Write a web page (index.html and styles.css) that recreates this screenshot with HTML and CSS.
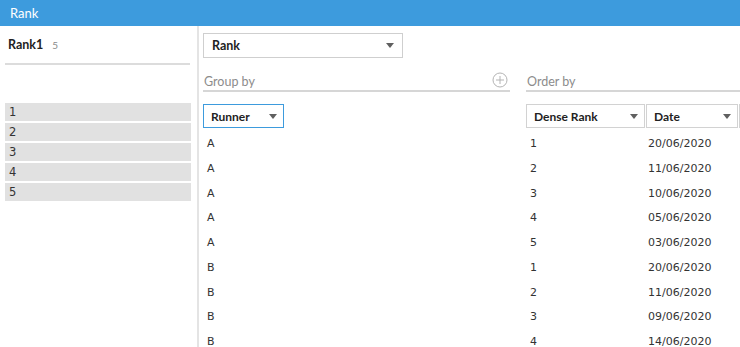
FILE: index.html
```html
<!DOCTYPE html>
<html lang="en">
<head>
    <meta charset="UTF-8">
    <title>Rank</title>
    <link rel="stylesheet" href="styles.css">
</head>
<body>
    <div class="topbar">Rank</div>
    <div class="workspace">
        <aside class="side">
            <div class="side-title">
                <span class="side-name">Rank1</span>
                <span class="side-count">5</span>
            </div>
            <div class="side-rule"></div>
            <ul class="side-list">
                <li>1</li>
                <li>2</li>
                <li>3</li>
                <li>4</li>
                <li>5</li>
            </ul>
        </aside>

        <main class="main">
            <div class="select select-calc">
                <span>Rank</span>
                <span class="caret"></span>
            </div>

            <div class="sections">
                <section class="group-by">
                    <div class="section-label">
                        <span>Group by</span>
                        <svg class="plus" width="16" height="16" viewBox="0 0 16 16">
                            <circle cx="8" cy="8" r="7" fill="none" stroke="#b4b4b4" stroke-width="1"/>
                            <path d="M8 4V12M4 8H12" stroke="#b4b4b4" stroke-width="1"/>
                        </svg>
                    </div>
                    <div class="fields">
                        <div class="field field-active field-runner">
                            <span>Runner</span>
                            <span class="caret"></span>
                        </div>
                    </div>
                    <div class="rows">
                        <div class="row"><span class="cell">A</span></div>
                        <div class="row"><span class="cell">A</span></div>
                        <div class="row"><span class="cell">A</span></div>
                        <div class="row"><span class="cell">A</span></div>
                        <div class="row"><span class="cell">A</span></div>
                        <div class="row"><span class="cell">B</span></div>
                        <div class="row"><span class="cell">B</span></div>
                        <div class="row"><span class="cell">B</span></div>
                        <div class="row"><span class="cell">B</span></div>
                    </div>
                </section>

                <section class="order-by">
                    <div class="section-label">
                        <span>Order by</span>
                    </div>
                    <div class="fields">
                        <div class="field field-dense">
                            <span>Dense Rank</span>
                            <span class="caret"></span>
                        </div>
                        <div class="field field-date">
                            <span>Date</span>
                            <span class="caret"></span>
                        </div>
                        <div class="field field-more"></div>
                    </div>
                    <div class="rows">
                        <div class="row"><span class="cell cell-dense">1</span><span class="cell">20/06/2020</span></div>
                        <div class="row"><span class="cell cell-dense">2</span><span class="cell">11/06/2020</span></div>
                        <div class="row"><span class="cell cell-dense">3</span><span class="cell">10/06/2020</span></div>
                        <div class="row"><span class="cell cell-dense">4</span><span class="cell">05/06/2020</span></div>
                        <div class="row"><span class="cell cell-dense">5</span><span class="cell">03/06/2020</span></div>
                        <div class="row"><span class="cell cell-dense">1</span><span class="cell">20/06/2020</span></div>
                        <div class="row"><span class="cell cell-dense">2</span><span class="cell">11/06/2020</span></div>
                        <div class="row"><span class="cell cell-dense">3</span><span class="cell">09/06/2020</span></div>
                        <div class="row"><span class="cell cell-dense">4</span><span class="cell">14/06/2020</span></div>
                    </div>
                </section>
            </div>
        </main>
    </div>
</body>
</html>
```

FILE: styles.css
```css
:root {
    --blue: #3d9bdd;
    --line: #e4e4e4;
    --text: #333333;
    --muted: #8a8a8a;
}

* {
    box-sizing: border-box;
    margin: 0;
    padding: 0;
}

body {
    font-family: 'Lato', 'Open Sans', sans-serif;
    color: var(--text);
    background: #ffffff;
    width: 740px;
    height: 347px;
    overflow: hidden;
}

.topbar {
    height: 26px;
    background-color: var(--blue);
    color: #ffffff;
    font-size: 13px;
    line-height: 26px;
    padding-left: 10px;
}

.workspace {
    display: flex;
    height: 321px;
}

/* левая панель */
.side {
    width: 199px;
    flex-shrink: 0;
    border-right: 2px solid var(--line);
}

.side-title {
    height: 37px;
    padding: 11px 0 0 8px;
    display: flex;
    align-items: baseline;
    gap: 9px;
}

.side-name {
    font-size: 12.5px;
    font-weight: 700;
    color: #222222;
}

.side-count {
    font-size: 10px;
    color: var(--muted);
}

.side-rule {
    height: 2px;
    margin: 0 7px 0 5px;
    background-color: #dcdcdc;
}

.side-list {
    list-style: none;
    margin: 38px 6px 0 5px;
    display: flex;
    flex-direction: column;
    gap: 2px;
}

.side-list li {
    height: 18px;
    line-height: 19px;
    background-color: #e1e1e1;
    padding-left: 4px;
    font-family: 'DejaVu Sans', sans-serif;
    font-size: 11.5px;
    color: #333333;
}

/* основная область */
.main {
    flex: 1;
    padding: 7px 0 0 4px;
    min-width: 0;
}

.select {
    display: flex;
    align-items: center;
    justify-content: space-between;
    border: 1px solid #cfcfcf;
    height: 25px;
    padding: 0 8px;
    font-size: 12.5px;
    font-weight: 700;
    color: #222222;
}

.select-calc {
    width: 200px;
}

.caret {
    width: 0;
    height: 0;
    border-left: 4px solid transparent;
    border-right: 4px solid transparent;
    border-top: 5px solid #606060;
}

.sections {
    display: flex;
    gap: 16px;
    margin-top: 14px;
}

.group-by {
    width: 307px;
    flex-shrink: 0;
}

.order-by {
    flex: 1;
}

.section-label {
    display: flex;
    justify-content: space-between;
    align-items: center;
    height: 20px;
    border-bottom: 2px solid #d6d6d6;
    font-size: 12.5px;
    color: #8c8c8c;
    padding-left: 1px;
}

.plus {
    margin-right: 2px;
    margin-bottom: 2px;
}

.fields {
    display: flex;
    gap: 1px;
    margin-top: 12px;
}

.field {
    display: flex;
    align-items: center;
    justify-content: space-between;
    height: 24px;
    padding: 0 6px 0 7px;
    border: 1px solid #d2d2d2;
    font-size: 12px;
    font-weight: 700;
    color: #222222;
}

.field-active {
    border-color: var(--blue);
}

.field-runner {
    width: 81px;
}

.field-dense {
    width: 119px;
}

.field-date {
    width: 92px;
}

.field-more {
    flex: 1;
    border-right: none;
}

.rows {
    margin-top: 4px;
}

.row {
    display: flex;
    height: 24.75px;
    line-height: 24.75px;
    font-family: 'DejaVu Sans', sans-serif;
    font-size: 11px;
    color: #333333;
}

.cell {
    padding-left: 4px;
}

.cell-dense {
    width: 118px;
}
```
